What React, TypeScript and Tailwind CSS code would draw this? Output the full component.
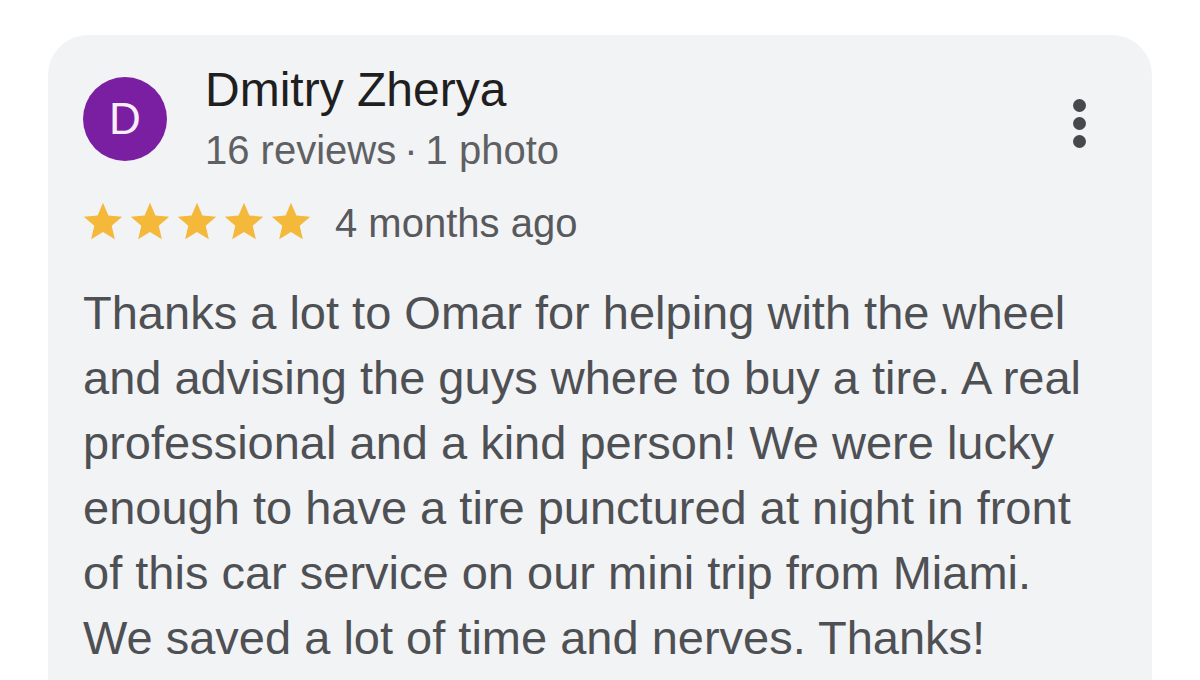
const reviewLines = [
  "Thanks a lot to Omar for helping with the wheel",
  "and advising the guys where to buy a tire. A real",
  "professional and a kind person! We were lucky",
  "enough to have a tire punctured at night in front",
  "of this car service on our mini trip from Miami.",
  "We saved a lot of time and nerves. Thanks!",
];

function Star() {
  return (
    <svg viewBox="0 0 24 24" className="w-[46px] h-[46px] shrink-0" fill="#f4b83a">
      <path d="M12 17.27L18.18 21l-1.64-7.03L22 9.24l-7.19-.61L12 2 9.19 8.63 2 9.24l5.46 4.73L5.82 21z" />
    </svg>
  );
}

export default function App() {
  return (
    <div className="h-[680px] w-full overflow-hidden bg-white pt-[35px] px-[48px] font-['Liberation_Sans',Arial,sans-serif]">
      <div className="h-[700px] rounded-[40px] bg-[#f2f3f5] pl-[35px] pr-[66px] pt-[29px]">
        {/* Header */}
        <div className="flex items-start">
          <div className="mt-[13px] w-[84px] h-[84px] rounded-full bg-[#7b1fa2] flex items-center justify-center text-[#fbeefc] text-[44px] leading-none shrink-0">
            D
          </div>
          <div className="ml-[38px] flex-1">
            <div className="text-[48px] leading-[52px] text-[#1f1f1f]">Dmitry Zherya</div>
            <div className="mt-[12px] text-[40px] leading-[44px] text-[#5f6063]">
              16 reviews<span className="mx-[8px]">·</span>1 photo
            </div>
          </div>
          <div className="mt-[35px] flex flex-col gap-[5px]">
            <span className="w-[13px] h-[13px] rounded-full bg-[#47484b]" />
            <span className="w-[13px] h-[13px] rounded-full bg-[#47484b]" />
            <span className="w-[13px] h-[13px] rounded-full bg-[#47484b]" />
          </div>
        </div>

        {/* Rating */}
        <div className="mt-[26px] -ml-[3px] flex items-center">
          <div className="flex gap-px">
            <Star />
            <Star />
            <Star />
            <Star />
            <Star />
          </div>
          <span className="ml-[21px] mt-[2px] text-[40px] leading-[46px] text-[#58595c]">4 months ago</span>
        </div>

        {/* Body */}
        <div className="mt-[34px] text-[47px] leading-[65px] text-[#4e5054]">
          {reviewLines.map((line) => (
            <div key={line} className="whitespace-nowrap">
              {line}
            </div>
          ))}
        </div>
      </div>
    </div>
  );
}
